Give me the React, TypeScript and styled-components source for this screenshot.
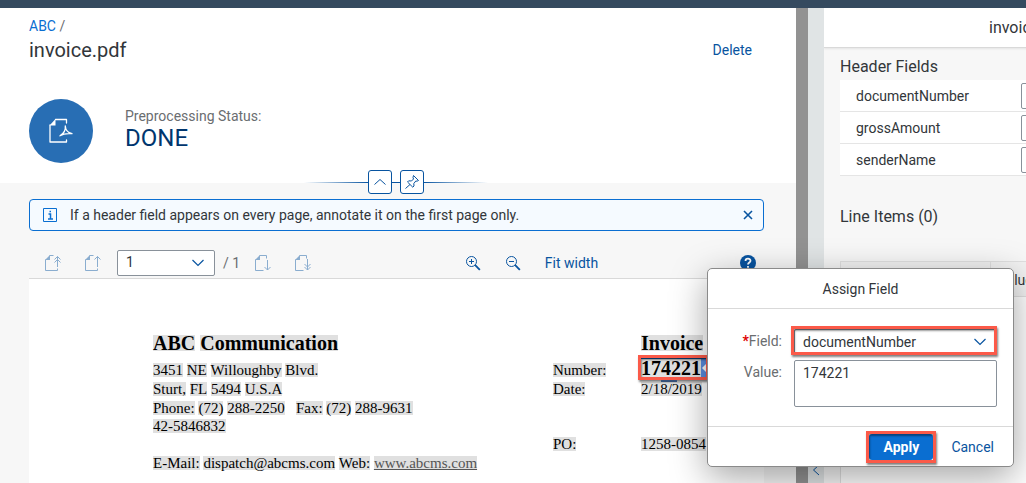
import React from "react";
import styled, { createGlobalStyle, css } from "styled-components";

const blue = "#0854a0";

const GlobalStyle = createGlobalStyle`
  * { box-sizing: border-box; }
  body {
    margin: 0;
    font-family: Roboto, "Liberation Sans", sans-serif;
    font-size: 14px;
    line-height: 20px;
    color: #32363a;
    background: #f7f7f7;
  }
  button, input, select, textarea { font: inherit; color: inherit; margin: 0; }
  h1, h2, p { margin: 0; font-weight: 400; }
`;

const Shell = styled.div`
  position: relative;
  display: flex;
  flex-direction: column;
  height: 100vh;
  overflow: hidden;
`;
const ShellBar = styled.header`
  flex: none;
  height: 8px;
  background: #354a5f;
`;
const Split = styled.main`
  flex: 1;
  display: flex;
  min-height: 0;
`;
const Viewer = styled.section`
  flex: 1;
  min-width: 0;
  display: flex;
  flex-direction: column;
  overflow: hidden;
`;
const ScrollTrack = styled.div`
  flex: none;
  width: 12px;
  background: #929292;
`;
const Splitter = styled.div`
  flex: none;
  width: 16px;
  display: flex;
  flex-direction: column;
  align-items: center;
  background: #e0e4e5;
`;
const CollapseButton = styled.button`
  margin-top: 456px;
  padding: 0;
  border: 0;
  background: none;
  color: ${blue};
  display: flex;
`;

/* Object page header */
const PageHeader = styled.header`
  position: relative;
  flex: none;
  height: 175px;
  padding: 8px 32px 0 29px;
  background: #fff;
`;
const Crumbs = styled.nav`
  color: #6a6d70;
  a { color: #0a6ed1; text-decoration: none; }
`;
const TitleRow = styled.div`
  display: flex;
  justify-content: space-between;
  align-items: center;
  height: 28px;
`;
const Title = styled.h1`
  font-size: 20px;
  line-height: 24px;
`;
const TextButton = styled.button<{ $tight?: boolean }>`
  height: 26px;
  padding: 0 ${(p) => (p.$tight ? 8 : 12)}px;
  border: 0;
  background: none;
  color: ${blue};
`;
const Facets = styled.div`
  display: flex;
  align-items: center;
  gap: 32px;
  margin-top: 35px;
`;
const Avatar = styled.div`
  width: 64px;
  height: 64px;
  border-radius: 50%;
  background: #286eb4;
  display: flex;
  align-items: center;
  justify-content: center;
`;
const Status = styled.div`
  padding-bottom: 4px;
`;
const StatusLabel = styled.p`
  color: #6a6d70;
  line-height: 18px;
`;
const StatusValue = styled.p`
  font-size: 24px;
  line-height: 26px;
  color: #00366e;
`;
const HeaderActions = styled.div`
  position: absolute;
  left: 0;
  right: 4px;
  bottom: -11px;
  display: flex;
  justify-content: center;
  align-items: center;
`;
const Line = styled.span<{ $side: "left" | "mid" | "right" }>`
  width: ${(p) => (p.$side === "mid" ? 8 : 64)}px;
  height: 1px;
  background: ${(p) =>
    p.$side === "mid" ? blue : `linear-gradient(to ${p.$side}, ${blue}, transparent)`};
`;
const SquareButton = styled.button`
  width: 24px;
  height: 24px;
  padding: 0;
  display: flex;
  align-items: center;
  justify-content: center;
  border: 1px solid ${blue};
  border-radius: 3px;
  background: #fff;
  color: ${blue};
`;

/* Message strip and toolbar */
const MessageStrip = styled.div`
  flex: none;
  display: flex;
  align-items: center;
  gap: 12px;
  height: 32px;
  margin: 16px 32px 0 29px;
  padding: 0 7px 0 13px;
  border: 1px solid #0a6ed1;
  border-radius: 4px;
  background: #f5faff;
  p { flex: 1; }
`;
const IconButton = styled.button<{ $small?: boolean }>`
  width: ${(p) => (p.$small ? 16 : 32)}px;
  height: 26px;
  padding: 0;
  border: 0;
  background: none;
  display: flex;
  align-items: center;
  justify-content: center;
  color: ${blue};
  &:disabled { color: ${blue}; opacity: 0.45; }
`;
const Toolbar = styled.div`
  flex: none;
  display: flex;
  justify-content: space-between;
  align-items: center;
  height: 31px;
  margin: 16px 32px 0 29px;
  padding-left: 8px;
`;
const Group = styled.div<{ $inset?: boolean }>`
  display: flex;
  align-items: center;
  gap: 8px;
  padding-left: ${(p) => (p.$inset ? 12 : 0)}px;
`;
const PageTotal = styled.span`
  width: 16px;
  white-space: nowrap;
  color: #6a6d70;
`;
const SelectBox = styled.span<{ $width?: number }>`
  display: flex;
  position: relative;
  height: 26px;
  width: ${(p) => (p.$width ? `${p.$width}px` : "auto")};
  color: ${blue};
  > svg { position: absolute; right: 10px; top: 9px; pointer-events: none; }
`;
const Select = styled.select`
  appearance: none;
  width: 100%;
  height: 26px;
  padding: 0 28px 1px 8px;
  border: 1px solid #89919a;
  border-radius: 2px;
  background: #fff;
  color: #32363a;
`;

/* Document */
const Sheet = styled.article`
  flex: 1;
  min-height: 0;
  overflow: hidden;
  margin: 0 32px 0 29px;
  padding: 55px 0 0 124px;
  border-top: 1px solid #d9d9d9;
  background: #fff;
  color: #000;
  font-family: "Liberation Serif", serif;
  font-size: 15px;
`;
const DocGrid = styled.div`
  display: grid;
  grid-template-columns: 400px 88px auto;
  grid-template-rows: 25px 21px 19px 18px 18px 19px 19px;
  align-items: baseline;
  line-height: 18px;
  white-space: nowrap;
`;
const Mark = styled.span`
  display: inline-block;
  line-height: 14px;
  background: #e0e0e0;
`;
const Cell = styled.div<{ $col: number; $row: number; $large?: boolean }>`
  grid-column: ${(p) => p.$col};
  grid-row: ${(p) => p.$row};
  ${(p) =>
    p.$large &&
    css`
      font-size: 20px;
      font-weight: 700;
      ${Mark} { line-height: 16px; }
    `}
`;
const DocLink = styled.a`
  display: inline-block;
  line-height: 14px;
  background: #e0e0e0;
  color: #555;
`;
const Selection = styled.span`
  position: relative;
  display: inline-block;
  height: 18px;
  padding-right: 5px;
  outline: 1px solid ${blue};
  background: linear-gradient(to left, #5a8de0 5px, #e0e0e0 5px);
  &::before, &::after {
    content: "";
    position: absolute;
    left: 20px;
    width: 16px;
    height: 2px;
    background: #35507a;
  }
  &::before { top: -2px; }
  &::after { bottom: -5px; }
`;
const Caret = styled.svg`
  position: absolute;
  right: 0;
  top: 5px;
`;
const Callout = styled.span<{ $inset: string }>`
  position: absolute;
  inset: ${(p) => p.$inset};
  border: 3px solid #fb5a49;
  box-shadow: 1px 2px 2px rgba(0, 0, 0, 0.5), inset 1px 2px 2px rgba(0, 0, 0, 0.4);
  pointer-events: none;
`;

/* Side panel */
const Panel = styled.aside`
  flex: none;
  width: 202px;
  overflow: hidden;
`;
const PanelBody = styled.div`
  width: 202%;
`;
const PanelTitle = styled.h2`
  height: 40px;
  border-bottom: 1px solid #d9d9d9;
  box-shadow: 0 1px 2px rgba(0, 0, 0, 0.08);
  background: #fff;
  font-size: 16px;
  line-height: 40px;
  text-align: center;
`;
const SectionTitle = styled.h2<{ $gap: number }>`
  margin-top: ${(p) => p.$gap}px;
  padding-left: 16px;
  font-size: 16px;
  line-height: 24px;
`;
const FieldList = styled.div`
  margin: 1px 16px 0;
`;
const FieldRow = styled.div`
  display: flex;
  align-items: center;
  height: 32px;
  padding-left: 16px;
  border-bottom: 1px solid #e5e5e5;
  background: #fff;
  label { width: 165px; }
`;
const Input = styled.input`
  flex: 1;
  min-width: 0;
  height: 26px;
  border: 1px solid #89919a;
  border-radius: 2px;
  background: #fff;
`;
const ItemsTable = styled.table`
  width: 372px;
  margin: 32px 16px 0;
  border-collapse: collapse;
  border: 1px solid #e0e0e0;
  background: #fff;
  th {
    height: 35px;
    padding: 2px 7px 0;
    border: 1px solid #e0e0e0;
    background: #f2f2f2;
    font-weight: 400;
    text-align: left;
  }
  th:first-child { width: 150px; }
  td { height: 220px; }
`;

/* Assign dialog */
const Dialog = styled.form`
  position: absolute;
  top: 268px;
  right: 12px;
  width: 307px;
  border: 1px solid #8a8a8a;
  border-radius: 5px;
  background: #fff;
  box-shadow: 0 10px 36px rgba(0, 0, 0, 0.36);
`;
const DialogTitle = styled.h2`
  height: 40px;
  border-bottom: 1px solid #d9d9d9;
  font-size: 14px;
  line-height: 40px;
  text-align: center;
`;
const DialogBody = styled.div`
  display: grid;
  grid-template-columns: 74px 1fr;
  gap: 5px 12px;
  padding: 20px 16px 19px 0;
`;
const Label = styled.label<{ $required?: boolean }>`
  line-height: 25px;
  text-align: right;
  color: #6a6d70;
  ${(p) =>
    p.$required &&
    css`
      &::before { content: "*"; color: #d00; font-weight: 700; }
    `}
`;
const TextArea = styled.textarea`
  display: block;
  width: 100%;
  height: 47px;
  padding: 2px 8px;
  border: 1px solid #89919a;
  border-radius: 2px;
  resize: none;
`;
const DialogFooter = styled.footer`
  display: flex;
  justify-content: flex-end;
  align-items: center;
  gap: 6px;
  height: 40px;
  padding-right: 7px;
  border-top: 1px solid #d9d9d9;
`;
const PrimaryButton = styled.button`
  position: relative;
  width: 64px;
  height: 26px;
  padding: 0;
  border: 0;
  border-radius: 3px;
  background: #0a6ed1;
  color: #fff;
  font-weight: 700;
`;

type Glyph = { d: string; width?: number; fillPath?: string };
const Icon = ({ d, width = 1, fillPath }: Glyph) => (
  <svg width="16" height="16" viewBox="0 0 16 16" fill="none" stroke="currentColor" strokeWidth={width} aria-hidden="true">
    <path d={d} />
    {fillPath && <path d={fillPath} fill="currentColor" stroke="none" />}
  </svg>
);
const Chevron = () => (
  <svg width="14" height="8" viewBox="0 0 14 8" fill="none" stroke="currentColor" strokeWidth="1.2" aria-hidden="true">
    <path d="M1.500 1l5.500 5.500L12.500 1" />
  </svg>
);

const sheetUp = "M4.500 .5H8.500M.5 4.500V15.500H12.500V13.500";
const sheetDown = "M4.500 .5H11.500V3.500M.5 4.500V15.500H8.500";
const fold = "M0 5L5 0V5z";
const lens = "M11.500 6.500a5 5 0 1 1-10 0 5 5 0 0 1 10 0z";
const lensHandle = "M9.500 10.800l1.300-1.300 4.700 4.700-1.300 1.300z";

const Words = ({ text }: { text: string }) => (
  <>
    {text.split(" ").map((word, i) => (
      <React.Fragment key={i}>
        {i > 0 && " "}
        {word === "_" ? "\u00a0" : <Mark>{word}</Mark>}
      </React.Fragment>
    ))}
  </>
);

const lines: { col: number; row: number; text: string; large?: boolean }[] = [
  { col: 1, row: 1, text: "ABC Communication", large: true },
  { col: 3, row: 1, text: "Invoice", large: true },
  { col: 1, row: 2, text: "3451 NE Willoughby Blvd." },
  { col: 2, row: 2, text: "Number:" },
  { col: 1, row: 3, text: "Sturt, FL 5494 U.S.A" },
  { col: 2, row: 3, text: "Date:" },
  { col: 3, row: 3, text: "2/18/2019" },
  { col: 1, row: 4, text: "Phone: (72) 288-2250 _ Fax: (72) 288-9631" },
  { col: 1, row: 5, text: "42-5846832" },
  { col: 2, row: 6, text: "PO:" },
  { col: 3, row: 6, text: "1258-0854" },
];

export default function App() {
  return (
    <Shell>
      <GlobalStyle />
      <ShellBar />
      <Split>
        <Viewer>
          <PageHeader>
            <Crumbs>
              <a href="#abc">ABC</a> /
            </Crumbs>
            <TitleRow>
              <Title>invoice.pdf</Title>
              <TextButton type="button">Delete</TextButton>
            </TitleRow>
            <Facets>
              <Avatar>
                <svg width="24" height="26" viewBox="0 0 24 26" fill="none" stroke="#fff" strokeWidth="1.3" strokeLinejoin="round" strokeLinecap="round" aria-hidden="true">
                  <path d="M6.500 1.500H17.500V5M1 7V24H17.500V22" />
                  <path d="M.5 7.500L6.500 1V7.500z" fill="#fff" stroke="none" />
                  <path d="M16.300 8c.4 3.500-1.600 7.500-5.300 9.800M16.300 8c.2 3.800 2.700 6.700 6.700 7.700M11 17.800c2.500-1.600 7-2.600 12-2.100" />
                </svg>
              </Avatar>
              <Status>
                <StatusLabel>Preprocessing Status:</StatusLabel>
                <StatusValue>DONE</StatusValue>
              </Status>
            </Facets>
            <HeaderActions>
              <Line $side="left" />
              <SquareButton type="button" aria-label="Collapse header">
                <Icon d="M2.500 10.500L8 5.500l5.500 5" />
              </SquareButton>
              <Line $side="mid" />
              <SquareButton type="button" aria-label="Pin header">
                <Icon d="M9.500 1.500l5 5-1.500.7-1.200-.2-2 2.500.2 2.500-1.200 1.200L3.500 8l1.200-1.200 2.800.2 2-2-.5-1.500zM6 10.500L1.500 14.500" />
              </SquareButton>
              <Line $side="right" />
            </HeaderActions>
          </PageHeader>

          <MessageStrip role="status">
            <svg width="15" height="15" viewBox="0 0 15 15" fill="none" stroke="#0a6ed1" aria-hidden="true">
              <path d="M.5 .5h13v13H.5z" />
              <path d="M5.500 6H7.500V11M5 11h5M6.500 3.500h1.500" strokeWidth="1.500" />
            </svg>
            <p>If a header field appears on every page, annotate it on the first page only.</p>
            <IconButton $small type="button" aria-label="Close message">
              <Icon d="M4 4l8 8M12 4l-8 8" width={1.6} />
            </IconButton>
          </MessageStrip>

          <Toolbar>
            <Group>
              <IconButton type="button" disabled aria-label="First page">
                <Icon d={sheetUp + "M12.500 1.500V12M9.500 4.500l3-3 3 3M9.500 7.500l3-3 3 3"} fillPath={fold} />
              </IconButton>
              <IconButton type="button" disabled aria-label="Previous page">
                <Icon d={sheetUp + "M12.500 1.500V12M9.500 4.500l3-3 3 3"} fillPath={fold} />
              </IconButton>
              <SelectBox $width={98}>
                <Select aria-label="Page" defaultValue="1">
                  <option>1</option>
                </Select>
                <Chevron />
              </SelectBox>
              <PageTotal>/ 1</PageTotal>
              <IconButton type="button" disabled aria-label="Next page">
                <Icon d={sheetDown + "M12.500 5V15M9.500 12l3 3 3-3"} fillPath={fold} />
              </IconButton>
              <IconButton type="button" disabled aria-label="Last page">
                <Icon d={sheetDown + "M12.500 4V15M9.500 12l3 3 3-3M9.500 9l3 3 3-3"} fillPath={fold} />
              </IconButton>
            </Group>
            <Group $inset>
              <IconButton type="button" aria-label="Zoom in">
                <Icon d={lens + "M6.500 4v5M4 6.500h5"} fillPath={lensHandle} />
              </IconButton>
              <IconButton type="button" aria-label="Zoom out">
                <Icon d={lens + "M4 6.500h5"} fillPath={lensHandle} />
              </IconButton>
              <TextButton type="button" $tight>
                Fit width
              </TextButton>
            </Group>
            <IconButton type="button" aria-label="Help">
              <svg width="16" height="16" viewBox="0 0 16 16" fill="none" aria-hidden="true">
                <circle cx="8" cy="8" r="8" fill={blue} />
                <path d="M5.500 6c0-3 5-3 5-.3C10.500 7.500 8 7.500 8 9.500M8 11v1.800" stroke="#fff" strokeWidth="1.800" />
              </svg>
            </IconButton>
          </Toolbar>

          <Sheet>
            <DocGrid>
              {lines.map((line) => (
                <Cell key={line.text} $col={line.col} $row={line.row} $large={line.large}>
                  <Words text={line.text} />
                </Cell>
              ))}
              <Cell $col={3} $row={2} $large>
                <Selection>
                  174221
                  <Caret width="5" height="8" viewBox="0 0 5 8" aria-hidden="true">
                    <path d="M5 0L1 4l4 4z" fill="#fff" />
                  </Caret>
                  <Callout $inset="-4px -3px -3px" />
                </Selection>
              </Cell>
              <Cell $col={1} $row={7}>
                <Words text="E-Mail: dispatch@abcms.com Web:" /> <DocLink href="#web">www.abcms.com</DocLink>
              </Cell>
            </DocGrid>
          </Sheet>
        </Viewer>
        <ScrollTrack />
        <Splitter>
          <CollapseButton type="button" aria-label="Expand panel">
            <svg width="8" height="12" viewBox="0 0 8 12" fill="none" stroke="currentColor" aria-hidden="true">
              <path d="M7 1L1.500 6 7 11" />
            </svg>
          </CollapseButton>
        </Splitter>

        <Panel>
          <PanelBody>
            <PanelTitle>invoice.pdf</PanelTitle>
            <SectionTitle $gap={7}>Header Fields</SectionTitle>
            <FieldList>
              {["documentNumber", "grossAmount", "senderName"].map((name) => (
                <FieldRow key={name}>
                  <label htmlFor={name}>{name}</label>
                  <Input id={name} />
                </FieldRow>
              ))}
            </FieldList>
            <SectionTitle $gap={29}>Line Items (0)</SectionTitle>
            <ItemsTable>
              <thead>
                <tr>
                  <th scope="col" aria-label="Field" />
                  <th scope="col">Value</th>
                </tr>
              </thead>
              <tbody>
                <tr>
                  <td colSpan={2} />
                </tr>
              </tbody>
            </ItemsTable>
          </PanelBody>
        </Panel>
      </Split>

      <Dialog role="dialog" aria-labelledby="assign-title">
        <DialogTitle id="assign-title">Assign Field</DialogTitle>
        <DialogBody>
          <Label htmlFor="field" $required>
            Field:
          </Label>
          <SelectBox>
            <Select id="field" defaultValue="documentNumber">
              <option>documentNumber</option>
              <option>grossAmount</option>
              <option>senderName</option>
            </Select>
            <Chevron />
            <Callout $inset="-3px 0 0 -3px" />
          </SelectBox>
          <Label htmlFor="value">Value:</Label>
          <TextArea id="value" defaultValue="174221" />
        </DialogBody>
        <DialogFooter>
          <PrimaryButton type="button">
            Apply
            <Callout $inset="-3px" />
          </PrimaryButton>
          <TextButton type="button">Cancel</TextButton>
        </DialogFooter>
      </Dialog>
    </Shell>
  );
}
